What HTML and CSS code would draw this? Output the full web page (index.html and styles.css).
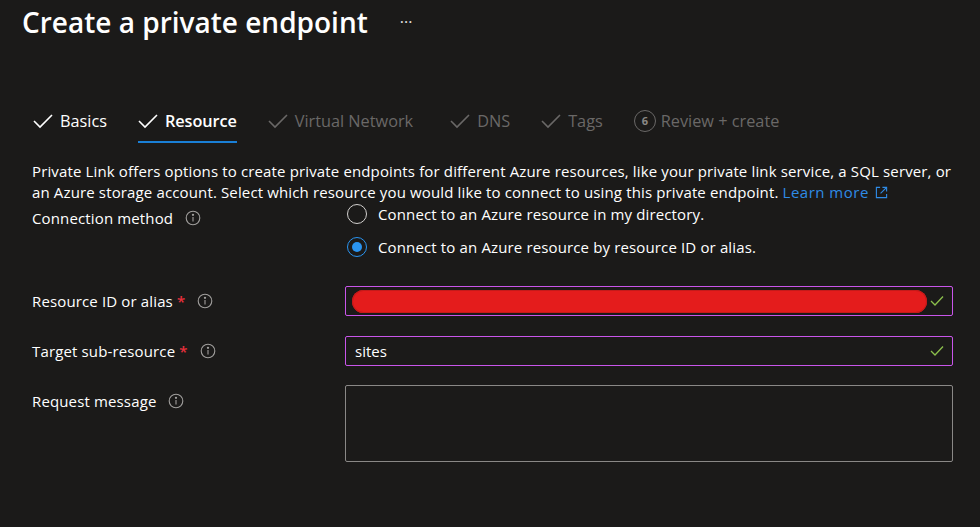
FILE: index.html
```html
<!DOCTYPE html>
<html>
<head>
<meta charset="utf-8">
<link rel="stylesheet" href="styles.css">
</head>
<body>
<div class="page">
  <header class="header">
    <h1 class="title">Create a private endpoint</h1>
    <span class="more">···</span>
  </header>

  <nav class="tabs">
    <div class="tab done">
      <svg class="chk" viewBox="0 0 20 16"><polyline points="1,8 7,14 19,2" /></svg>
      <span>Basics</span>
    </div>
    <div class="tab done active">
      <svg class="chk" viewBox="0 0 20 16"><polyline points="1,8 7,14 19,2" /></svg>
      <span>Resource</span>
    </div>
    <div class="tab dim">
      <svg class="chk" viewBox="0 0 20 16"><polyline points="1,8 7,14 19,2" /></svg>
      <span>Virtual Network</span>
    </div>
    <div class="tab dim tab-dns">
      <svg class="chk" viewBox="0 0 20 16"><polyline points="1,8 7,14 19,2" /></svg>
      <span>DNS</span>
    </div>
    <div class="tab dim">
      <svg class="chk" viewBox="0 0 20 16"><polyline points="1,8 7,14 19,2" /></svg>
      <span>Tags</span>
    </div>
    <div class="tab dim">
      <span class="num">6</span>
      <span>Review + create</span>
    </div>
  </nav>

  <main class="content">
    <p class="desc">Private Link offers options to create private endpoints for different Azure resources, like your private link service, a SQL server, or<br>an Azure storage account. Select which resource you would like to connect to using this private endpoint. <a class="link" href="#">Learn more <svg class="ext" viewBox="0 0 14 14"><path d="M5.5 1.5H1.5V12.5H12.5V8.5" /><path d="M8 1.5H12.5V6" /><path d="M12.5 1.5L6 8" /></svg></a></p>

    <div class="row row-conn">
      <div class="label">Connection method <svg class="info" viewBox="0 0 16 16"><circle cx="8" cy="8" r="6.8"/><line x1="8" y1="7" x2="8" y2="11.5"/><circle class="dot" cx="8" cy="4.8" r="0.6"/></svg></div>
      <div class="radios">
        <label class="radio"><span class="circle"></span>Connect to an Azure resource in my directory.</label>
        <label class="radio on"><span class="circle"><span class="inner"></span></span>Connect to an Azure resource by resource ID or alias.</label>
      </div>
    </div>

    <div class="row row-input">
      <div class="label">Resource ID or alias <span class="req">*</span> <svg class="info" viewBox="0 0 16 16"><circle cx="8" cy="8" r="6.8"/><line x1="8" y1="7" x2="8" y2="11.5"/><circle class="dot" cx="8" cy="4.8" r="0.6"/></svg></div>
      <div class="field valid">
        <span class="redact"></span>
        <svg class="ok" viewBox="0 0 14 12"><polyline points="1,6 5,10 13,1.5"/></svg>
      </div>
    </div>

    <div class="row row-input">
      <div class="label">Target sub-resource <span class="req">*</span> <svg class="info" viewBox="0 0 16 16"><circle cx="8" cy="8" r="6.8"/><line x1="8" y1="7" x2="8" y2="11.5"/><circle class="dot" cx="8" cy="4.8" r="0.6"/></svg></div>
      <div class="field valid">
        <span class="val">sites</span>
        <svg class="ok" viewBox="0 0 14 12"><polyline points="1,6 5,10 13,1.5"/></svg>
      </div>
    </div>

    <div class="row row-text">
      <div class="label">Request message <svg class="info" viewBox="0 0 16 16"><circle cx="8" cy="8" r="6.8"/><line x1="8" y1="7" x2="8" y2="11.5"/><circle class="dot" cx="8" cy="4.8" r="0.6"/></svg></div>
      <div class="textarea"></div>
    </div>
  </main>
</div>
</body>
</html>
```

FILE: styles.css
```css
* { box-sizing: border-box; }
html, body {
  margin: 0;
  padding: 0;
  background: #1b1a19;
  color: #ffffff;
  font-family: "Open Sans", "Noto Sans", sans-serif;
}
.page {
  width: 980px;
  height: 527px;
  overflow: hidden;
}
.header {
  display: flex;
  align-items: center;
  height: 44px;
  padding-left: 22px;
}
.title {
  margin: 0;
  font-size: 28px;
  font-weight: 600;
  line-height: 44px;
  color: #ffffff;
}
.more {
  margin-left: 32px;
  font-size: 16px;
  color: #e0e0e0;
  letter-spacing: 0;
}
.tabs {
  display: flex;
  margin-top: 61px;
  padding-left: 33px;
  gap: 31px;
}
.tab {
  display: flex;
  align-items: center;
  gap: 7px;
  height: 38px;
  padding-top: 6px;
  padding-bottom: 10px;
  border-bottom: 2px solid transparent;
  font-size: 16.3px;
  line-height: 20px;
  letter-spacing: 0;
}
.tab-dns { margin-left: 6px; }
.tab.done { color: #ffffff; }
.tab.active { font-weight: 600; border-bottom-color: #1a7fd6; letter-spacing: -0.1px; }
.tab.dim { color: #6a6867; }
.chk {
  width: 20px;
  height: 16px;
  fill: none;
  stroke: currentColor;
  stroke-width: 1.6;
}
.tab.done .chk { stroke: #ffffff; }
.num {
  display: inline-flex;
  align-items: center;
  justify-content: center;
  width: 22px;
  height: 22px;
  border: 1.5px solid #6a6867;
  border-radius: 50%;
  font-size: 11px;
  font-weight: 700;
  color: #8a8886;
  letter-spacing: 0;
  margin-right: -2px;
}
.content {
  padding-left: 32px;
}
.desc {
  margin: 18px 0 0 0;
  font-size: 15px;
  line-height: 21px;
  color: #ffffff;
  letter-spacing: 0.14px;
  white-space: nowrap;
}
.link {
  color: #2f8be6;
  text-decoration: none;
  letter-spacing: 0.5px;
}
.ext {
  width: 13px;
  height: 13px;
  margin-left: 2px;
  fill: none;
  stroke: #2f8be6;
  stroke-width: 1.2;
  vertical-align: -1px;
}
.row {
  display: grid;
  grid-template-columns: 313px 608px;
}
.label {
  display: flex;
  align-items: center;
  font-size: 15px;
  line-height: 20px;
  letter-spacing: 0.14px;
  color: #ffffff;
  height: 20px;
}
.req {
  color: #e8303c;
  margin-left: 4px;
  font-weight: 600;
}
.info {
  width: 16px;
  height: 16px;
  margin-left: 12px;
  fill: none;
  stroke: #a19f9d;
  stroke-width: 1.1;
}
.info .dot { fill: #a19f9d; }
.row-conn .label { margin-top: 5px; }
.radios {
  display: flex;
  flex-direction: column;
  gap: 11px;
}
.radio {
  display: flex;
  align-items: center;
  height: 22px;
  font-size: 15px;
  letter-spacing: 0.14px;
  color: #ffffff;
  gap: 11px;
  padding-left: 2px;
}
.circle {
  display: flex;
  align-items: center;
  justify-content: center;
  width: 20px;
  height: 20px;
  border: 1px solid #d2d0ce;
  border-radius: 50%;
}
.radio.on .circle { border-color: #2a94f0; }
.inner {
  width: 10px;
  height: 10px;
  border-radius: 50%;
  background: #2a94f0;
}
.row-input { margin-top: 28px; align-items: center; }
.row-input + .row-input { margin-top: 20px; }
.field {
  display: flex;
  align-items: center;
  height: 30px;
  border: 1px solid #c955ea;
  border-radius: 2px;
  padding: 0 8px 0 6px;
}
.redact {
  flex: 0 0 575px;
  height: 23px;
  border-radius: 12px;
  background: #e41c1c;
  box-shadow: inset 0 0 0 1px #c41a1a;
}
.val {
  flex: 1;
  padding-left: 3px;
  font-size: 15px;
  color: #ffffff;
}
.ok {
  margin-left: auto;
  width: 14px;
  height: 12px;
  fill: none;
  stroke: #8cbf4c;
  stroke-width: 1.3;
}
.row-text { margin-top: 19px; }
.row-text .label { margin-top: 6px; }
.textarea {
  height: 77px;
  border: 1px solid #8a8886;
  border-radius: 2px;
}
```
